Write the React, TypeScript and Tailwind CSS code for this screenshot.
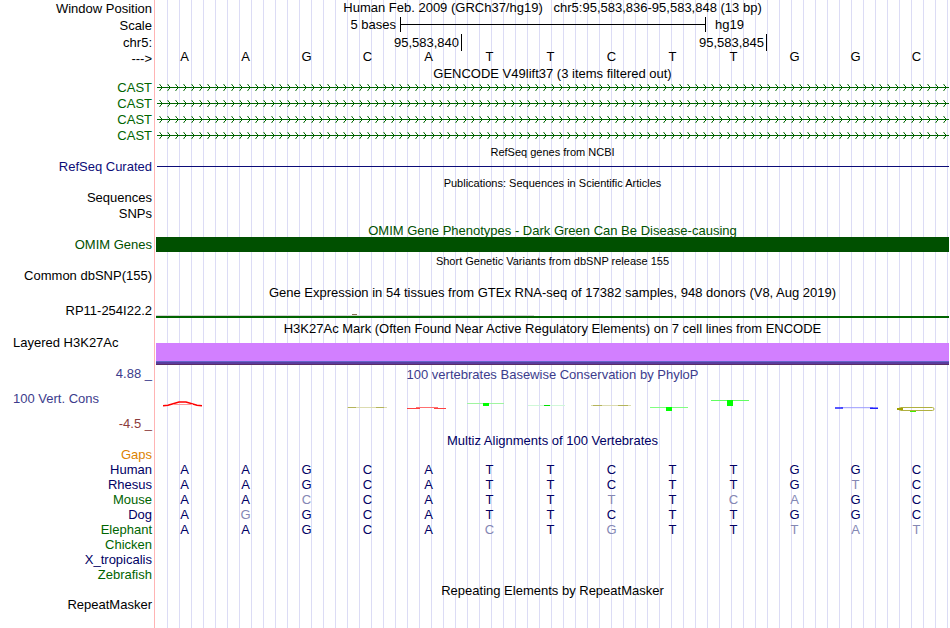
import type { ReactNode } from "react";

const BAR_GRID = "grid grid-cols-[repeat(13,minmax(0,1fr))]";

type RowProps = {
  label?: ReactNode;
  height: string;
  labelClass?: string;
  children?: ReactNode;
};

function Row({ label, height, labelClass = "", children }: RowProps) {
  return (
    <div className={`flex ${height}`}>
      <div className={`w-[155px] shrink-0 border-r border-[#ffb4b4] pr-[2px] text-right whitespace-nowrap ${labelClass}`}>
        {label}
      </div>
      <div className="ml-px mr-px min-w-0 flex-1">{children}</div>
    </div>
  );
}

function Title({ children, height, className = "" }: { children: ReactNode; height: string; className?: string }) {
  return (
    <Row height={height}>
      <h2 className={`text-center whitespace-nowrap ${className}`}>{children}</h2>
    </Row>
  );
}

function Bases({ sequence, reference }: { sequence: string; reference?: string }) {
  return (
    <div className={BAR_GRID}>
      {sequence.split("").map((base, i) => (
        <span
          key={i}
          className={`pr-1 text-center ${reference && reference[i] !== base ? "text-[#8487b4]" : ""}`}
        >
          {base}
        </span>
      ))}
    </div>
  );
}

function Transcript({ id }: { id: string }) {
  return (
    <svg className="block h-4 w-full" shapeRendering="crispEdges">
      <defs>
        <pattern id={id} x="1" y="0" width="8" height="16" patternUnits="userSpaceOnUse">
          <path d="M2 4h1v1h-1zM2 10h1v1h-1z" fill="#6aa56a" />
          <path d="M3 5h1v1h-1zM3 9h1v1h-1z" fill="#0a6a0a" />
          <path d="M4 6h1v1h-1zM4 8h1v1h-1z" fill="#006400" />
          <path d="M3 4h1v1h-1zM3 10h1v1h-1z" fill="#a8cfa8" />
        </pattern>
      </defs>
      <rect x="1" y="7" width="100%" height="1" fill="#006400" />
      <rect x="1" y="0" width="100%" height="16" fill={`url(#${id})`} />
    </svg>
  );
}

function Conservation() {
  return (
    <svg className="block h-[49px] w-full" viewBox="0 0 793 49" preserveAspectRatio="none">
      <path d="M7 21.800 L12 21.300 L23 18 H30 L41 21.300 L46 21.800" fill="none" stroke="#ff0000" strokeWidth="1.500" />
      <path d="M17 20.500H37" stroke="#ff9999" />
      <path d="M191 23.500H231" stroke="#dcdcb0" />
      <path d="M192 23.500H200M220 23.500H228" stroke="#b4b45a" />
      <path d="M251 24.500H264M278 24.500H290" stroke="#ff4040" />
      <path d="M260 23.500H282" stroke="#ff7070" />
      <path d="M311 19.500H348" stroke="#a0f5a0" />
      <rect x="327" y="19" width="6" height="3" fill="#00ff00" />
      <path d="M372 21.500H409" stroke="#d0f8d8" />
      <rect x="388" y="21" width="6" height="1" fill="#00e000" />
      <path d="M435 21.500H475" stroke="#dcdcb0" />
      <path d="M437 21.500H446M462 21.500H472" stroke="#b4b45a" />
      <path d="M494 23.500H532" stroke="#80ff80" />
      <rect x="510" y="23" width="6" height="4" fill="#00ff00" />
      <path d="M555 16.500H593" stroke="#60ff60" />
      <rect x="571" y="16" width="6" height="6" fill="#00ff00" />
      <path d="M685 23.700H717" stroke="#9a9aff" />
      <path d="M679 24H687M714 24.300H722" stroke="#2020ff" strokeWidth="1.500" />
      <rect x="743" y="23.500" width="35" height="3" rx="1.500" fill="none" stroke="#b0b040" />
      <rect x="741" y="24" width="6" height="2" fill="#a0a000" />
      <rect x="754" y="27" width="6" height="1" fill="#40f000" />
    </svg>
  );
}

const HUMAN = "AAGCATTCTTGGC";

const SPECIES = [
  { name: "Human", sequence: "AAGCATTCTTGGC", color: "text-[#000064]" },
  { name: "Rhesus", sequence: "AAGCATTCTTGTC", color: "text-[#000064]" },
  { name: "Mouse", sequence: "AACCATTTTCAGC", color: "text-[#006400]" },
  { name: "Dog", sequence: "AGGCATTCTTGGC", color: "text-[#000064]" },
  { name: "Elephant", sequence: "AAGCACTGTTTAT", color: "text-[#006400]" },
  { name: "Chicken", sequence: "", color: "text-[#006400]" },
  { name: "X_tropicalis", sequence: "", color: "text-[#000064]" },
  { name: "Zebrafish", sequence: "", color: "text-[#006400]" },
];

export default function App() {
  return (
    <main className="relative flex min-h-screen flex-col bg-white font-['Liberation_Sans',Arial,sans-serif] text-[13px] leading-4 text-black">
      <div className="absolute inset-y-0 right-px left-[156px] bg-[repeating-linear-gradient(90deg,transparent_0_11px,#dcdcf5_11px_12px)]" />
      <div className="relative flex grow flex-col">
        <Row label="Window Position" height="h-[17px]" labelClass="leading-[17px]">
          <h1 className="text-center leading-[15px] whitespace-pre">
            {"Human Feb. 2009 (GRCh37/hg19)   chr5:95,583,836-95,583,848 (13 bp)"}
          </h1>
        </Row>
        <Row label="Scale" height="h-[17px]" labelClass="leading-[17px]">
          <div className={`${BAR_GRID} h-[15px] leading-[15px]`}>
            <span className="col-span-4 pr-1 text-right">5 bases</span>
            <div className="col-span-5 -mr-px flex items-center border-x border-black">
              <div className="h-px w-full bg-black" />
            </div>
            <span className="col-span-4 pl-[10px]">hg19</span>
          </div>
        </Row>
        <Row label="chr5:" height="h-4" labelClass="leading-[17px]">
          <div className={`${BAR_GRID} h-[15px] leading-[17px]`}>
            <span className="col-span-5 -mr-px border-r border-black pr-[2px] text-right">95,583,840</span>
            <span className="col-span-5 -mr-px border-r border-black pr-[2px] text-right">95,583,845</span>
          </div>
        </Row>
        <Row label="--->" height="h-4" labelClass="leading-[17px]">
          <div className="leading-[13px]">
            <Bases sequence={HUMAN} />
          </div>
        </Row>
        <Title height="h-[14px]" className="leading-[15px]">GENCODE V49lift37 (3 items filtered out)</Title>
        {["a", "b", "c", "d"].map((key) => (
          <Row key={key} label="CAST" height="h-4" labelClass="text-[#006400]">
            <Transcript id={`strand-${key}`} />
          </Row>
        ))}

        <Title height="h-[15px]" className="text-[11px]">RefSeq genes from NCBI</Title>
        <Row label="RefSeq Curated" height="h-4" labelClass="text-[#0c0c78]">
          <div className="pt-[7px] pl-px">
            <div className="h-px bg-[#0c0c78]" />
          </div>
        </Row>

        <Title height="h-[15px]" className="text-[11px]">Publications: Sequences in Scientific Articles</Title>
        <Row label="Sequences" height="h-4" />
        <Row label="SNPs" height="h-4" />

        <Title height="h-[15px]" className="leading-[17px] text-[#005000]">
          OMIM Gene Phenotypes - Dark Green Can Be Disease-causing
        </Title>
        <Row label="OMIM Genes" height="h-[15px]" labelClass="leading-[15px] text-[#005000]">
          <div className="h-full bg-[#005000]" />
        </Row>

        <Title height="h-4" className="text-[11px] leading-[18px]">Short Genetic Variants from dbSNP release 155</Title>
        <Row label="Common dbSNP(155)" height="h-4" />

        <Title height="h-[17px]" className="leading-[17px]">
          Gene Expression in 54 tissues from GTEx RNA-seq of 17382 samples, 948 donors (V8, Aug 2019)
        </Title>
        <Row label="RP11-254I22.2" height="h-[19px]" labelClass="leading-[19px]">
          <svg className="block h-[19px] w-full" shapeRendering="crispEdges">
            <rect x="0" y="14" width="378" height="1" fill="#d3d3d3" />
            <rect x="196" y="13" width="5" height="1" fill="#8b7355" />
            <rect x="0" y="15" width="100%" height="2" fill="#006400" />
          </svg>
        </Row>

        <Title height="h-[17px]" className="leading-[17px]">
          H3K27Ac Mark (Often Found Near Active Regulatory Elements) on 7 cell lines from ENCODE
        </Title>
        <Row
          label={<span className="block pl-[13px] text-left leading-3">Layered H3K27Ac</span>}
          height="h-[28px]"
        >
          <div className="pt-[6px]">
            <div className="h-[18px] bg-[#d27fff]" />
            <div className="h-px bg-[#6464c8]" />
            <div className="h-[2px] bg-[#5a3ca0]" />
            <div className="h-px bg-[#5a2d64]" />
          </div>
        </Row>

        <Row
          height="h-[68px]"
          labelClass="flex flex-col gap-2 leading-[17px]"
          label={
            <>
              <span className="text-[#3c3c8c]">4.88 _</span>
              <span className="pl-[13px] text-left text-[#3c3c8c]">100 Vert. Cons</span>
              <span className="text-[#8c3c3c]">-4.5 _</span>
            </>
          }
        >
          <h2 className="text-center leading-[19px] whitespace-nowrap text-[#3c3c8c]">
            100 vertebrates Basewise Conservation by PhyloP
          </h2>
          <Conservation />
        </Row>

        <Title height="h-[14px]" className="leading-[15px] text-[#000064]">Multiz Alignments of 100 Vertebrates</Title>
        <Row label="Gaps" height="h-[15px]" labelClass="leading-[15px] text-[#dc8200]" />
        {SPECIES.map(({ name, sequence, color }) => (
          <Row key={name} label={name} height="h-[15px]" labelClass={`leading-[15px] ${color}`}>
            <div className="leading-[15px] text-[#000064]">
              <Bases sequence={sequence} reference={HUMAN} />
            </div>
          </Row>
        ))}

        <Title height="h-[15px]" className="leading-[17px]">Repeating Elements by RepeatMasker</Title>
        <Row label="RepeatMasker" height="h-[15px]" labelClass="leading-[15px]" />
        <Row height="grow" />
      </div>
    </main>
  );
}
